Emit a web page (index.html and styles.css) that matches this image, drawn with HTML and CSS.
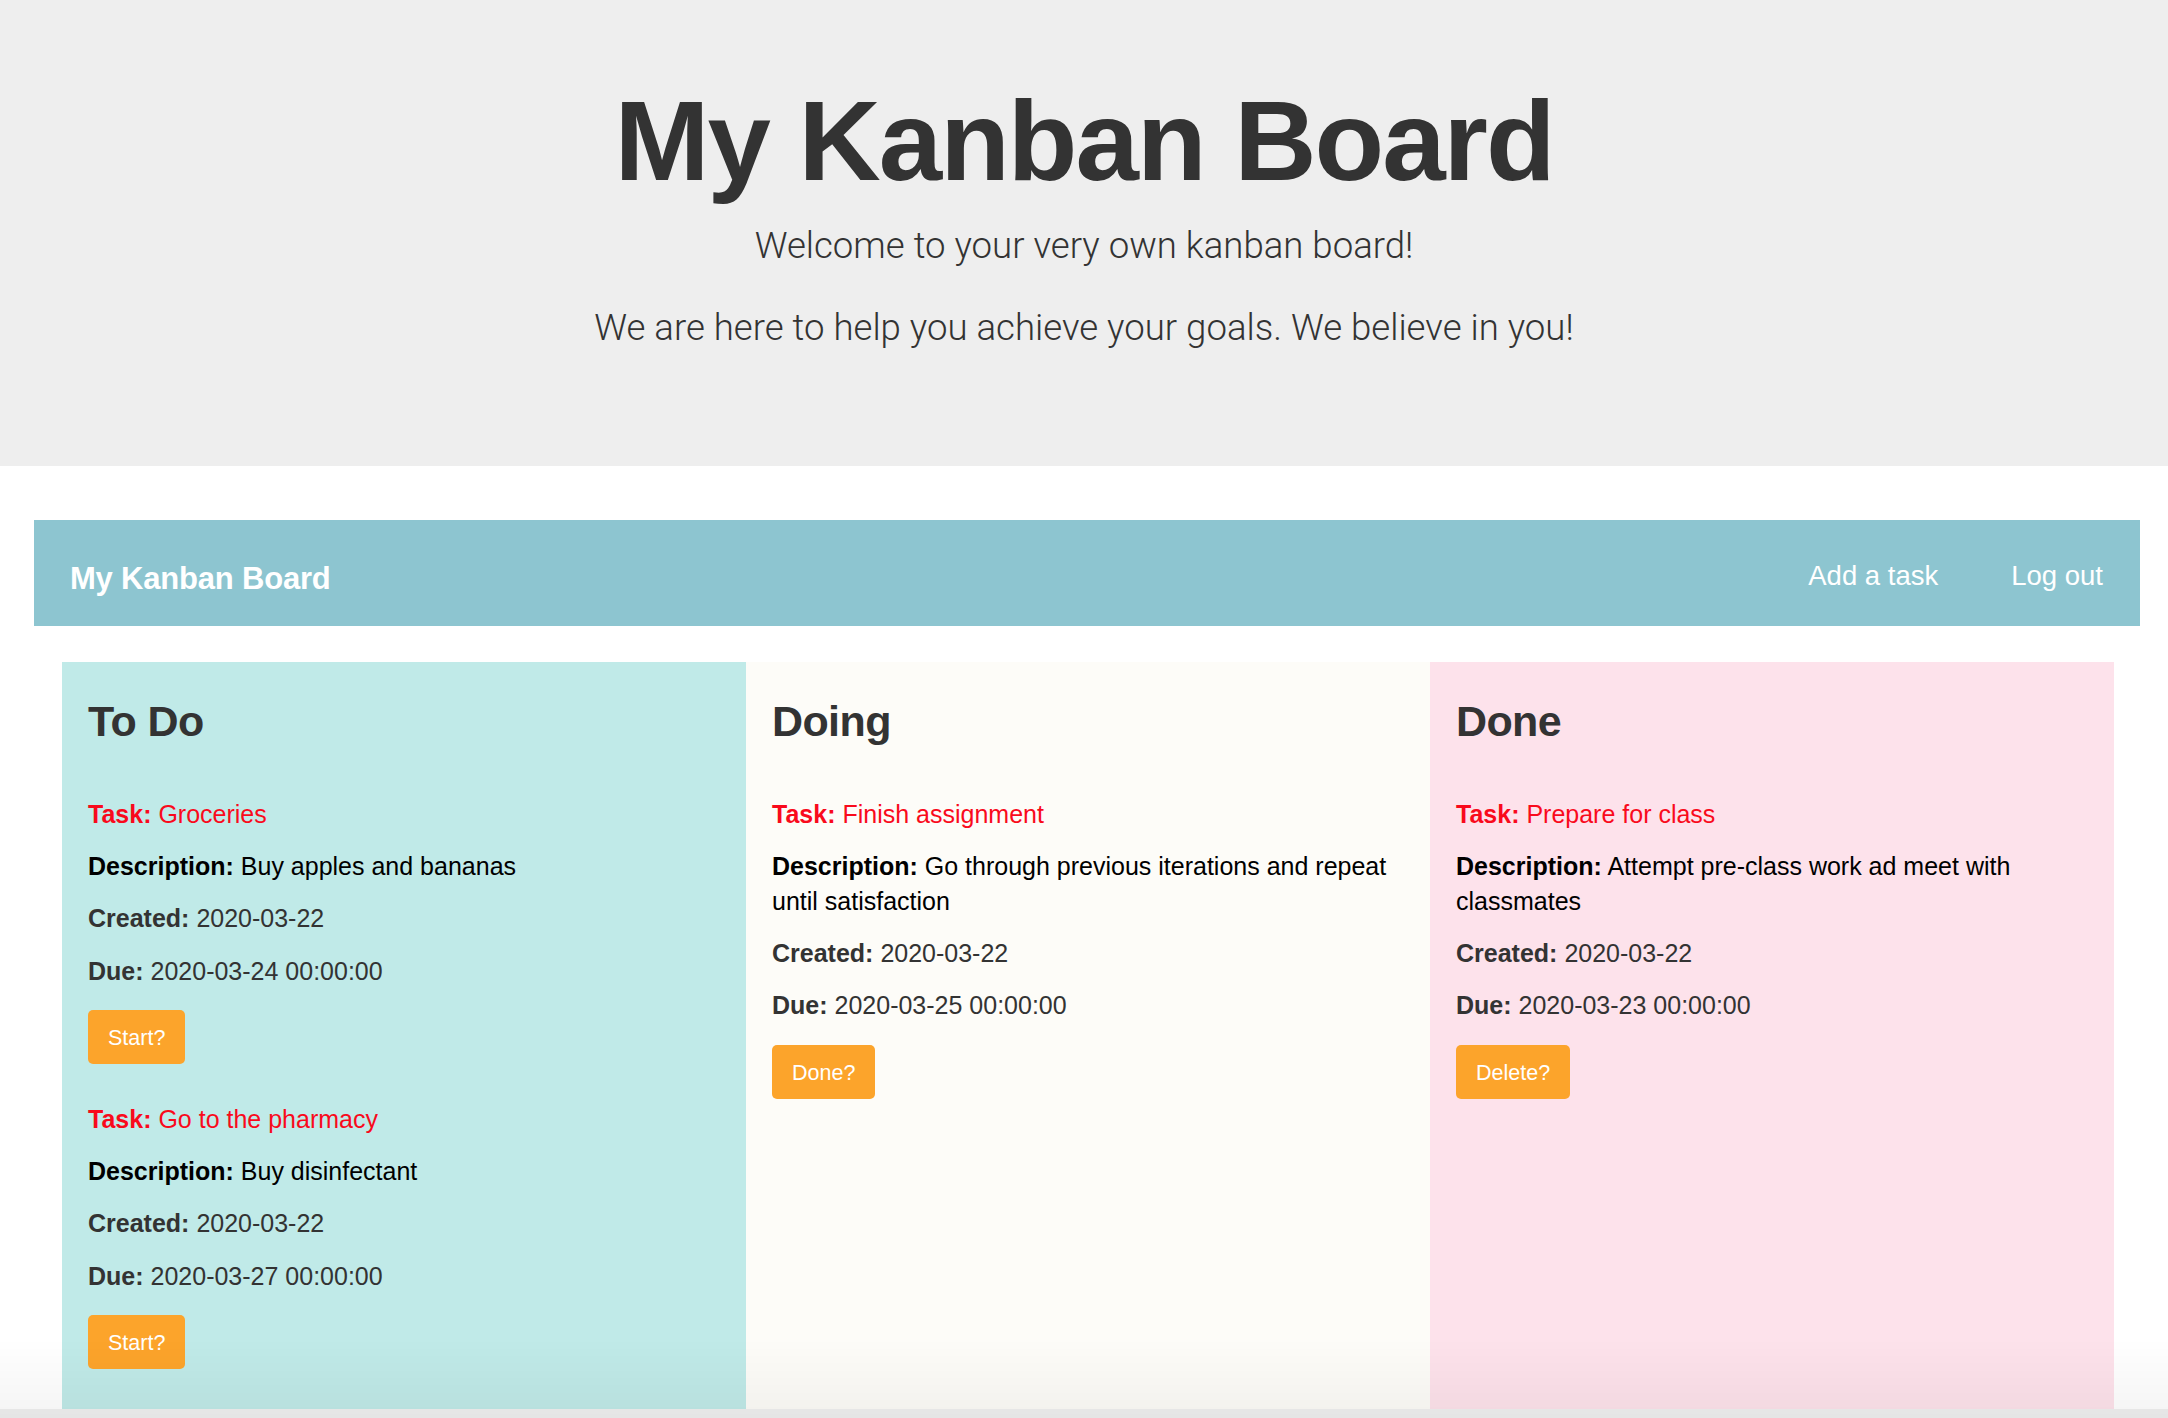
FILE: index.html
```html
<!DOCTYPE html>
<html lang="en">
<head>
<meta charset="utf-8">
<title>My Kanban Board</title>
<link rel="stylesheet" href="styles.css">
</head>
<body>
<header class="jumbo">
  <h1 class="jumbo-title">My Kanban Board</h1>
  <p class="jumbo-lead first">Welcome to your very own kanban board!</p>
  <p class="jumbo-lead">We are here to help you achieve your goals. We believe in you!</p>
</header>

<nav class="navbar">
  <a class="brand" href="#">My Kanban Board</a>
  <ul class="nav-links">
    <li><a href="#">Add a task</a></li>
    <li><a href="#">Log out</a></li>
  </ul>
</nav>

<main class="board">
  <section class="col col-todo">
    <h2 class="col-title">To Do</h2>
    <div class="task">
      <p class="task-name"><b>Task:</b> <span>Groceries</span></p>
      <p class="task-desc"><b>Description:</b> <span>Buy apples and bananas</span></p>
      <p class="task-meta"><b>Created:</b> <span>2020-03-22</span></p>
      <p class="task-meta"><b>Due:</b> <span>2020-03-24 00:00:00</span></p>
      <div class="task-action"><button class="btn">Start?</button></div>
    </div>
    <div class="task">
      <p class="task-name"><b>Task:</b> <span>Go to the pharmacy</span></p>
      <p class="task-desc"><b>Description:</b> <span>Buy disinfectant</span></p>
      <p class="task-meta"><b>Created:</b> <span>2020-03-22</span></p>
      <p class="task-meta"><b>Due:</b> <span>2020-03-27 00:00:00</span></p>
      <div class="task-action"><button class="btn">Start?</button></div>
    </div>
  </section>
  <section class="col col-doing">
    <h2 class="col-title">Doing</h2>
    <div class="task">
      <p class="task-name"><b>Task:</b> <span>Finish assignment</span></p>
      <p class="task-desc"><b>Description:</b> <span>Go through previous iterations and repeat</span> <span>until satisfaction</span></p>
      <p class="task-meta"><b>Created:</b> <span>2020-03-22</span></p>
      <p class="task-meta"><b>Due:</b> <span>2020-03-25 00:00:00</span></p>
      <div class="task-action"><button class="btn">Done?</button></div>
    </div>
  </section>
  <section class="col col-done">
    <h2 class="col-title">Done</h2>
    <div class="task">
      <p class="task-name"><b>Task:</b> <span>Prepare for class</span></p>
      <p class="task-desc"><b>Description:</b> <span>Attempt pre-class work ad meet with</span> <span>classmates</span></p>
      <p class="task-meta"><b>Created:</b> <span>2020-03-22</span></p>
      <p class="task-meta"><b>Due:</b> <span>2020-03-23 00:00:00</span></p>
      <div class="task-action"><button class="btn">Delete?</button></div>
    </div>
  </section>
</main>
<div class="window-edge"></div>
<div class="window-shade"></div>
</body>
</html>
```

FILE: styles.css
```css
* { box-sizing: border-box; }

html, body {
  margin: 0;
  padding: 0;
  background: #ffffff;
}

body {
  font-family: "Liberation Sans", Arial, Helvetica, sans-serif;
  color: #333333;
  width: 2168px;
  overflow: hidden;
}

/* Header */
.jumbo {
  background: #eeeeee;
  height: 466px;
  padding-top: 78px;
  text-align: center;
}

.jumbo-title {
  margin: 0;
  font-size: 114px;
  line-height: 125px;
  font-weight: 700;
  letter-spacing: -2px;
  color: #333333;
}

.jumbo-lead {
  margin: 0;
  font-family: Roboto, "Liberation Sans", sans-serif;
  font-weight: 300;
  font-size: 36.6px;
  line-height: 51px;
  color: #333333;
}

.jumbo-lead.first {
  margin-top: 17px;
  margin-bottom: 31px;
}

/* Navbar */
.navbar {
  margin: 54px 28px 0 34px;
  height: 106px;
  background: #8dc5d0;
  display: flex;
  align-items: center;
  justify-content: space-between;
  padding: 11px 37px 0 36px;
}

.brand {
  color: #ffffff;
  font-weight: 700;
  font-size: 31px;
  text-decoration: none;
  letter-spacing: -0.2px;
}

.nav-links {
  list-style: none;
  display: flex;
  gap: 73px;
  margin: 0 0 5px 0;
  padding: 0;
}

.nav-links a {
  color: #ffffff;
  font-size: 27.5px;
  text-decoration: none;
}

/* Board */
.board {
  display: flex;
  margin: 36px 54px 0 62px;
  align-items: stretch;
}

.col {
  flex: 1 1 0;
  padding: 0 26px 2px 26px;
}

.col-todo { background: #c0eae8; }
.col-doing { background: #fdfcf8; }
.col-done { background: #fde2eb; }

.col-title {
  margin: 35.5px 0 52px 0;
  font-size: 43px;
  line-height: 47.3px;
  font-weight: 700;
  letter-spacing: -0.6px;
  color: #333333;
}

.task p {
  margin: 0 0 17.7px 0;
  font-size: 25px;
  line-height: 34.6px;
}

.task-name { color: #f90a1c; }
.task-desc { color: #000000; }
.task-meta { color: #333333; }

.task-action {
  margin: 0 0 38px 0;
  padding-top: 4px;
}

.btn {
  display: block;
  height: 54px;
  padding: 2px 20px 0 20px;
  line-height: 52px;
  font-family: "Liberation Sans", Arial, sans-serif;
  font-size: 21.5px;
  color: #ffffff;
  background: #fca42b;
  border: none;
  border-radius: 5px;
  cursor: pointer;
}

/* bottom of the captured window */
.window-edge {
  height: 12px;
  background: #f0f0f0;
}

.window-shade {
  position: fixed;
  left: 0;
  right: 0;
  bottom: 0;
  height: 80px;
  pointer-events: none;
  background: linear-gradient(to bottom, rgba(0, 0, 0, 0) 0%, rgba(0, 0, 0, 0.045) 100%);
}
```
